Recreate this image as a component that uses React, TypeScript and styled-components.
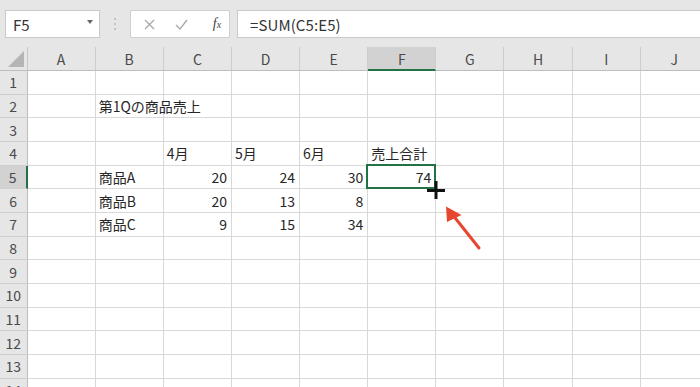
import React from 'react';
import styled, { createGlobalStyle } from 'styled-components';

const GlobalStyle = createGlobalStyle`
  html, body { margin: 0; padding: 0; background: #fff; overflow: hidden; }
  body { font-family: "Noto Sans CJK JP", "Noto Sans", sans-serif; }
`;

const Page = styled.div`
  width: 700px;
  height: 387px;
  overflow: hidden;
  background: #fff;
`;

const Toolbar = styled.div`
  display: flex;
  align-items: stretch;
  height: 28px;
  padding: 10px 0 9px 5px;
  background: #e6e6e6;
`;

const NameBox = styled.div`
  box-sizing: border-box;
  width: 95px;
  background: #fff;
  border: 1px solid #c9c9c9;
  display: flex;
  align-items: center;
  justify-content: space-between;
  padding: 0 6px 0 7px;
  font-size: 15px;
  color: #333;
`;

const DropArrow = styled.span`
  width: 0;
  height: 0;
  border-left: 3.5px solid transparent;
  border-right: 3.5px solid transparent;
  border-top: 4px solid #666;
  margin-top: -4px;
`;

const Dots = styled.div`
  width: 30px;
  display: flex;
  flex-direction: column;
  align-items: center;
  justify-content: center;
  gap: 3px;
  & > span {
    width: 2px;
    height: 2px;
    border-radius: 1px;
    background: #b4b4b4;
  }
`;

const ButtonGroup = styled.div`
  box-sizing: border-box;
  width: 100px;
  background: #fff;
  border: 1px solid #d0d0d0;
  display: flex;
  align-items: center;
  padding-left: 10px;
`;

const ToolIcon = styled.span<{ $w: number }>`
  width: ${(p) => p.$w}px;
  display: flex;
  align-items: center;
  justify-content: center;
`;

const Fx = styled.span`
  font-family: "Liberation Serif", "DejaVu Serif", serif;
  font-style: italic;
  font-size: 14px;
  color: #444;
  & > sub {
    font-size: 10px;
    vertical-align: 0;
  }
`;

const FormulaBox = styled.div`
  box-sizing: border-box;
  flex: 1;
  margin-left: 7px;
  margin-right: -10px;
  background: #fff;
  border: 1px solid #c9c9c9;
  display: flex;
  align-items: center;
  padding-left: 12px;
  font-size: 15px;
  color: #333;
  letter-spacing: 0.1px;
`;

const Sheet = styled.div`
  position: relative;
  display: grid;
  grid-template-columns: 27.5px repeat(10, 68.15px);
  grid-template-rows: 24px;
  grid-auto-rows: 23.68px;
  width: 720px;
`;

const Corner = styled.div`
  box-sizing: border-box;
  background: #e6e6e6;
  border-right: 1px solid #c6c6c6;
  border-bottom: 1px solid #bdbdbd;
  display: flex;
  align-items: flex-end;
  justify-content: flex-end;
  padding: 0 3px 3px 0;
`;

const CornerTriangle = styled.span`
  width: 0;
  height: 0;
  border-left: 16px solid transparent;
  border-bottom: 16px solid #b5b5b5;
`;

const ColHeader = styled.div<{ $active?: boolean }>`
  box-sizing: border-box;
  background: ${(p) => (p.$active ? '#d2d2d2' : '#e6e6e6')};
  border-right: 1px solid #cdcdcd;
  border-bottom: ${(p) => (p.$active ? '2px solid #217346' : '1px solid #bdbdbd')};
  display: flex;
  align-items: center;
  justify-content: center;
  font-size: 14px;
  color: #4a4a4a;
  padding-top: ${(p) => (p.$active ? '1px' : '0')};
`;

const RowHeader = styled.div<{ $active?: boolean }>`
  box-sizing: border-box;
  background: ${(p) => (p.$active ? '#d2d2d2' : '#e6e6e6')};
  border-right: ${(p) => (p.$active ? '2px solid #217346' : '1px solid #bdbdbd')};
  border-bottom: 1px solid #cfcfcf;
  display: flex;
  align-items: center;
  justify-content: center;
  font-size: 14px;
  color: #4a4a4a;
`;

const Cell = styled.div<{ $num?: boolean; $selected?: boolean }>`
  position: relative;
  box-sizing: border-box;
  border-right: 1px solid #d9d9d9;
  border-bottom: 1px solid #d9d9d9;
  display: flex;
  align-items: center;
  justify-content: ${(p) => (p.$num ? 'flex-end' : 'flex-start')};
  padding: 0 4px 0 3px;
  font-size: 14px;
  color: #262626;
  white-space: nowrap;
  ${(p) =>
    p.$selected &&
    `
    &::after {
      content: '';
      position: absolute;
      left: -2px;
      top: -2px;
      right: -1px;
      bottom: -1px;
      border: 2px solid #217346;
      pointer-events: none;
    }
  `}
`;

const Overlay = styled.svg`
  position: absolute;
  left: 0;
  top: 0;
  pointer-events: none;
  overflow: visible;
`;

const COLS = ['A', 'B', 'C', 'D', 'E', 'F', 'G', 'H', 'I', 'J'];

type CellVal = string | number;
const DATA: Record<string, CellVal> = {
  B2: '第1Qの商品売上',
  C4: '4月',
  D4: '5月',
  E4: '6月',
  F4: '売上合計',
  B5: '商品A',
  C5: 20,
  D5: 24,
  E5: 30,
  F5: 74,
  B6: '商品B',
  C6: 20,
  D6: 13,
  E6: 8,
  B7: '商品C',
  C7: 9,
  D7: 15,
  E7: 34,
};

export default function App() {
  const rows = Array.from({ length: 14 }, (_, i) => i + 1);
  return (
    <Page>
      <GlobalStyle />
      <Toolbar>
        <NameBox>
          <span>F5</span>
          <DropArrow />
        </NameBox>
        <Dots>
          <span />
          <span />
          <span />
        </Dots>
        <ButtonGroup>
          <ToolIcon $w={16}>
            <svg width="11" height="11" viewBox="0 0 11 11">
              <path d="M1 1 L10 10 M10 1 L1 10" stroke="#a8a8a8" strokeWidth="1.3" fill="none" />
            </svg>
          </ToolIcon>
          <ToolIcon $w={48}>
            <svg width="13" height="11" viewBox="0 0 13 11">
              <path d="M1 6 L5 10 L12 1" stroke="#a8a8a8" strokeWidth="1.3" fill="none" />
            </svg>
          </ToolIcon>
          <ToolIcon $w={24}>
            <Fx>
              f<sub>x</sub>
            </Fx>
          </ToolIcon>
        </ButtonGroup>
        <FormulaBox>=SUM(C5:E5)</FormulaBox>
      </Toolbar>
      <Sheet>
        <Corner>
          <CornerTriangle />
        </Corner>
        {COLS.map((c) => (
          <ColHeader key={c} $active={c === 'F'}>
            {c}
          </ColHeader>
        ))}
        {rows.map((r) => (
          <React.Fragment key={r}>
            <RowHeader $active={r === 5}>{r}</RowHeader>
            {COLS.map((c) => {
              const v = DATA[`${c}${r}`];
              return (
                <Cell key={c} $num={typeof v === 'number'} $selected={c === 'F' && r === 5}>
                  {v}
                </Cell>
              );
            })}
          </React.Fragment>
        ))}
        <Overlay width="700" height="340">
          <path d="M427 143.5 H445 M436 134 V152" stroke="#111" strokeWidth="3" fill="none" />
          <line x1="452" y1="167" x2="479" y2="201" stroke="#e8472f" strokeWidth="3" strokeLinecap="round" />
          <polygon points="446,159.5 461.5,168 447,175" fill="#e8472f" />
        </Overlay>
      </Sheet>
    </Page>
  );
}
